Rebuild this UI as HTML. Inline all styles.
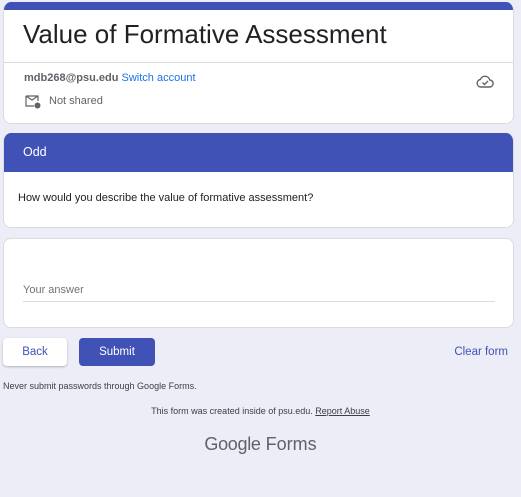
<!DOCTYPE html>
<html><head><style>
*{margin:0;padding:0;box-sizing:border-box}
body{width:521px;height:497px;background:#ecedf6;font-family:"Liberation Sans",Arial,sans-serif;position:relative;overflow:hidden;color:#202124}
.card{position:absolute;left:3px;width:511px;background:#fff;border:1px solid #dadce0;border-radius:8px;overflow:hidden}
.abs{position:absolute;white-space:nowrap}
</style></head><body>
<div class="card" style="top:2px;height:122px;border-top:none">
  <div style="height:8px;background:#4052b5"></div>
  <div class="abs" style="left:19px;top:17px;font-size:26px;color:#202124">Value of Formative Assessment</div>
  <div style="position:absolute;left:0;right:0;top:60px;border-top:1px solid #dadce0"></div>
  <div class="abs" style="left:20px;top:70px;font-size:11px;font-weight:bold;color:#5f6368">mdb268@psu.edu <span style="color:#1a73e8;font-weight:normal">Switch account</span></div>
  <svg class="abs" style="left:21px;top:93px" width="16" height="14" viewBox="0 0 16 14"><path d="M1 1h12v5M1 1v10h8M1 1l6 4 6-4" fill="none" stroke="#5f6368" stroke-width="1.2"/><circle cx="12.5" cy="10.5" r="3" fill="#5f6368"/></svg>
  <div class="abs" style="left:45px;top:93px;font-size:11px;color:#5f6368">Not shared</div>
  <svg class="abs" style="left:472px;top:73px" width="18" height="13" viewBox="0 0 18 13"><path d="M4.5 12h9a3.5 3.5 0 0 0 .3-7A5 5 0 0 0 4.3 4.5 3.8 3.8 0 0 0 4.5 12z" fill="none" stroke="#5f6368" stroke-width="1.4"/><path d="M6.5 7.5l2 2 3.5-3.5" fill="none" stroke="#5f6368" stroke-width="1.4"/></svg>
</div>
<div class="card" style="top:133px;height:95px;border-top:none">
  <div style="height:39px;background:#4052b5"></div>
  <div class="abs" style="left:19px;top:12px;font-size:12.5px;color:#fff">Odd</div>
  <div class="abs" style="left:14px;top:59px;font-size:11px;color:#202124">How would you describe the value of formative assessment?</div>
</div>
<div class="card" style="top:238px;height:90px">
  <div class="abs" style="left:19px;top:45px;font-size:11px;color:#70757a">Your answer</div>
  <div style="position:absolute;left:19px;width:472px;top:62px;border-top:1px solid #dadce0"></div>
</div>
<div class="abs" style="left:3px;top:338px;width:64px;height:28px;background:#fff;border-radius:4px;box-shadow:0 1px 2px rgba(0,0,0,.25);color:#4052b5;font-size:11.5px;text-align:center;line-height:28px">Back</div>
<div class="abs" style="left:79px;top:338px;width:76px;height:28px;background:#4052b5;border-radius:4px;color:#fff;font-size:11.5px;text-align:center;line-height:28px">Submit</div>
<div class="abs" style="right:13px;top:346px;font-size:11.5px;color:#4052b5">Clear form</div>
<div class="abs" style="left:3px;top:381px;font-size:9px;color:#3c4043">Never submit passwords through Google Forms.</div>
<div class="abs" style="left:0;width:521px;text-align:center;top:406px;font-size:9px;color:#3c4043">This form was created inside of psu.edu. <u>Report Abuse</u></div>
<div class="abs" style="left:0;width:521px;text-align:center;top:434px;font-size:18px;color:#5f6368"><span style="letter-spacing:-0.3px">Google</span> Forms</div>
</body></html>
